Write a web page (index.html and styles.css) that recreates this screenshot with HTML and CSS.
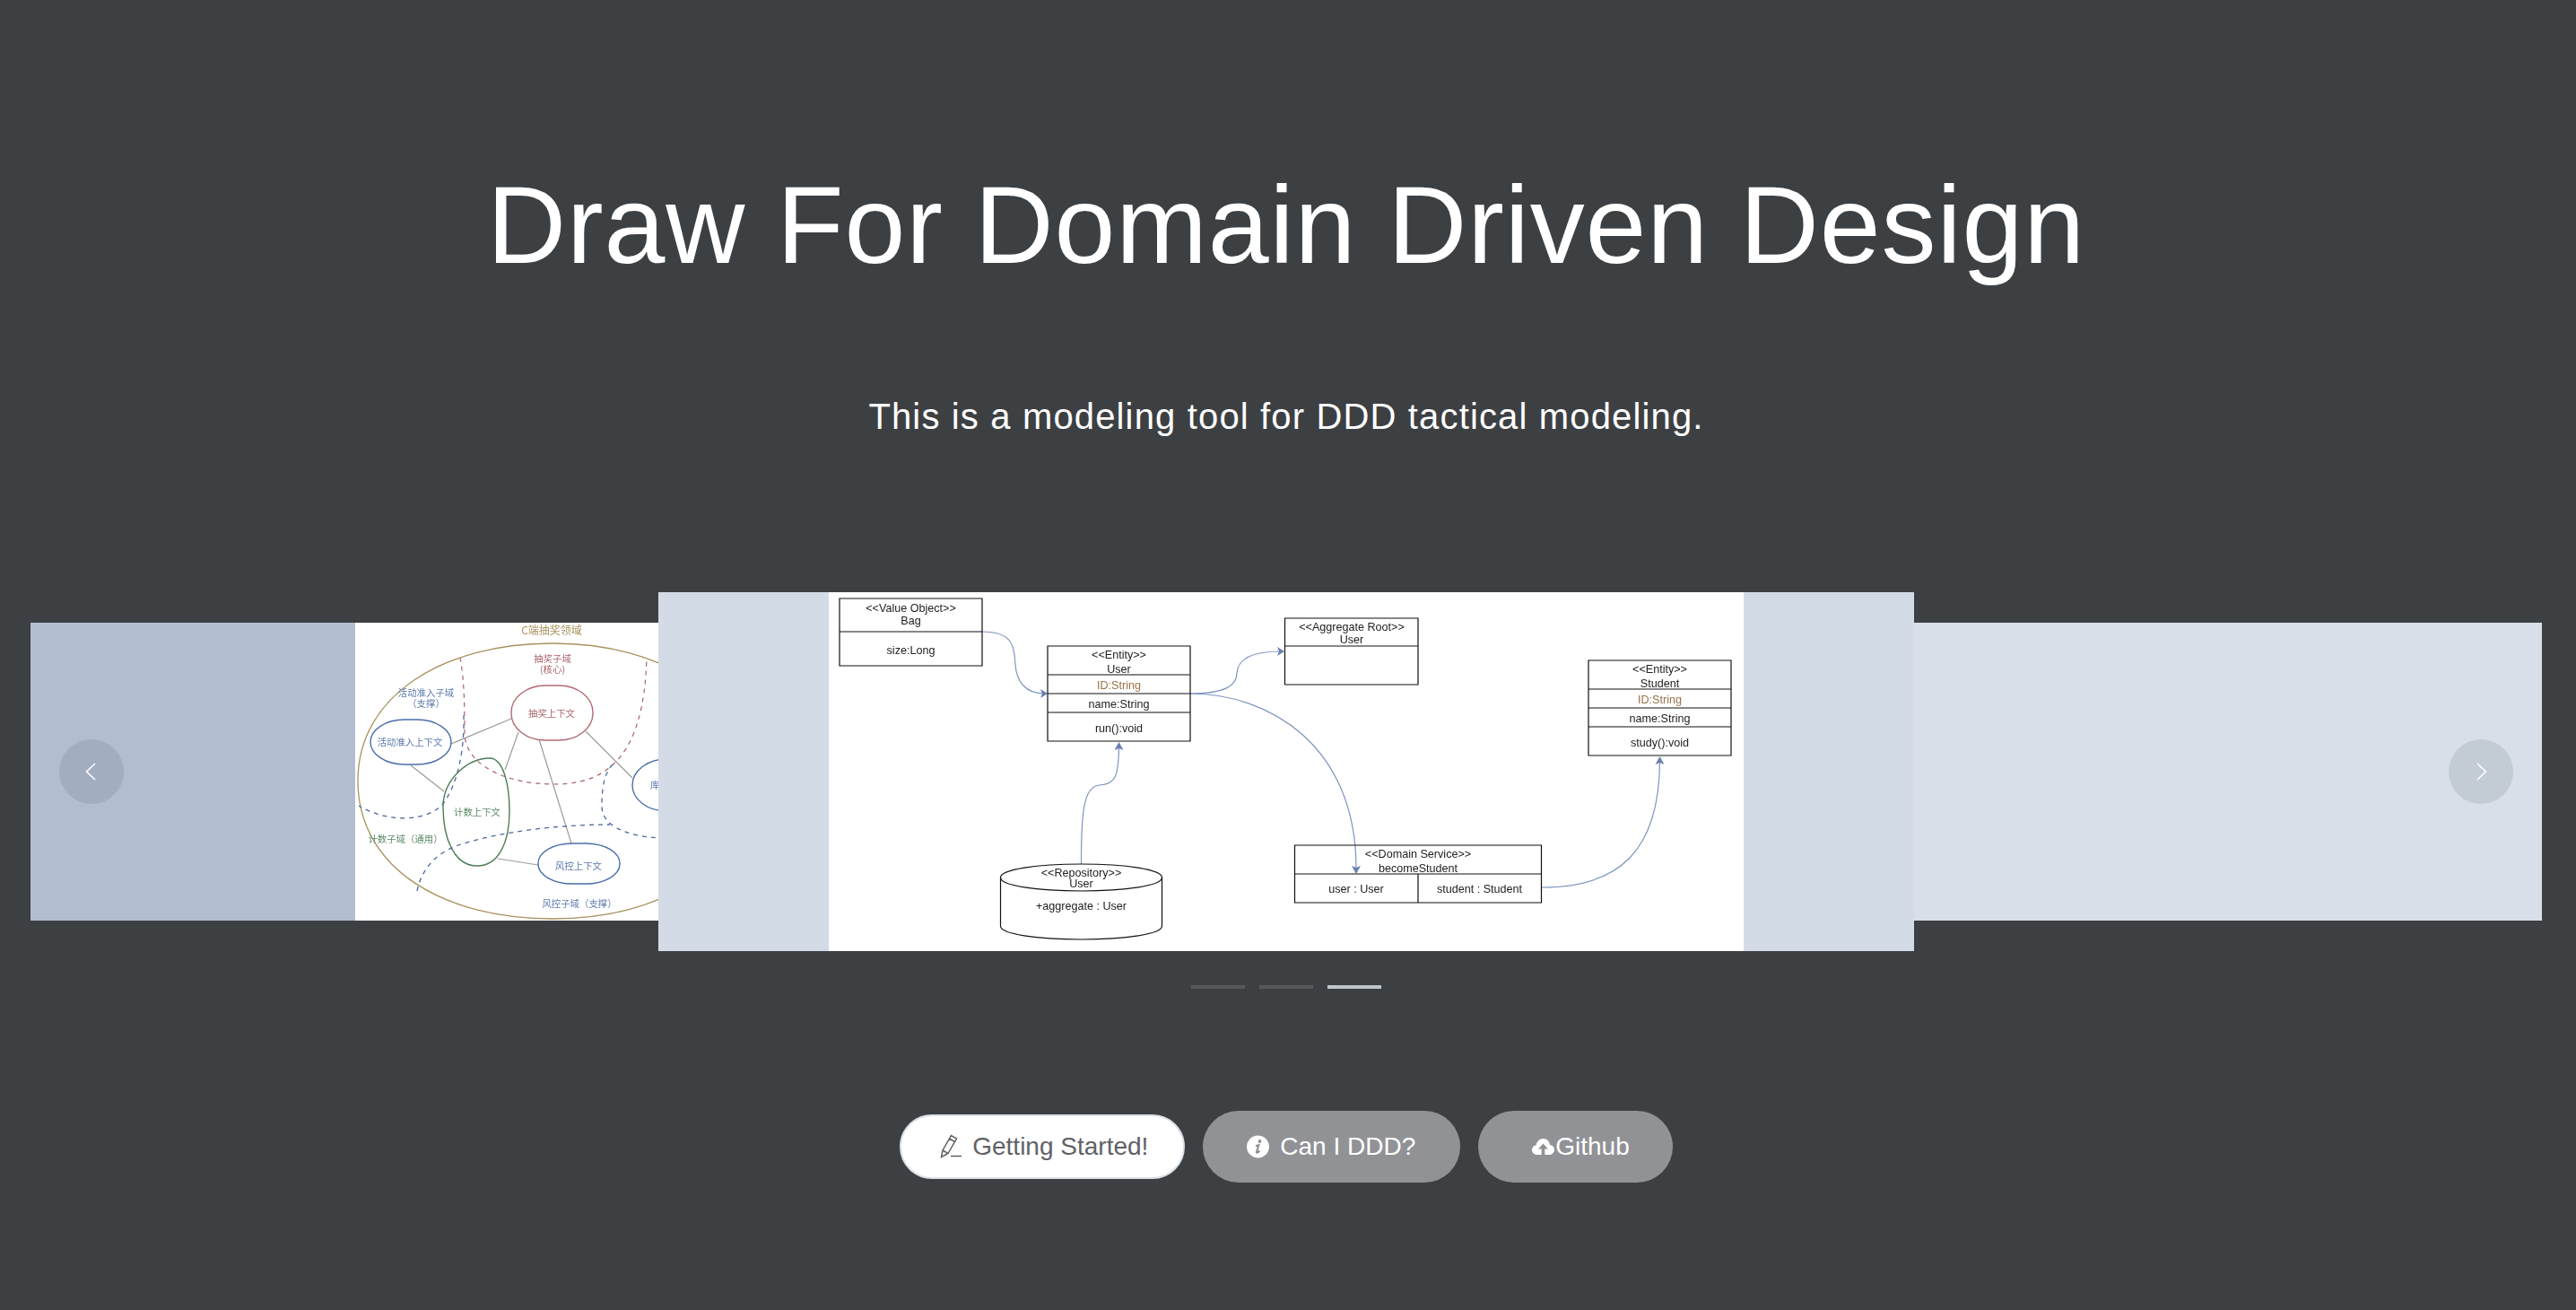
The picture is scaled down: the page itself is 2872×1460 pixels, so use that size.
FILE: index.html
```html
<!DOCTYPE html>
<html lang="en">
<head>
<meta charset="utf-8">
<title>Draw For Domain Driven Design</title>
<link rel="stylesheet" href="styles.css">
</head>
<body>
<main class="page">
  <h1 class="title">Draw For Domain Driven Design</h1>
  <p class="lead">This is a modeling tool for DDD tactical modeling.</p>

  <section class="carousel">
    <div class="card card-left">
      <svg class="shot" width="438" height="332" viewBox="0 0 438 332">
        <rect class="paper" width="438" height="332"/>
        <g class="ink">
        <path class="tan" d="M3 176C3 80 100 23 220 23C340 23 436 80 436 176C436 275 340 330 220 330C100 330 3 275 3 176Z"/>
        <path class="link" d="M107 135L174 107M62 159L99 188M182 122L167 164M205 130L241 246M257 121L309 173M159 263L204 270"/>
        <path class="dash-red" d="M117 39C122 65 122 100 122 125C124 160 170 180 222 180C280 180 322 150 325 39"/>
        <path class="dash-blue" d="M121 103C122 140 115 180 97 203C80 220 40 225 4 204"/>
        <path class="dash-blue" d="M69 299C75 270 95 255 115 248C170 230 240 225 284 225"/>
        <path class="dash-blue" d="M287 158C275 170 275 195 275 205C275 225 300 238 340 240"/>
        <rect class="ring-red" x="174" y="70" width="91" height="61" rx="38" ry="30"/>
        <rect class="ring-blue" x="17" y="108" width="90" height="50" rx="38" ry="25"/>
        <path class="ring-green" d="M150 151C165 151 172 180 172 210C172 245 160 271 136 271C110 271 98 240 98 205C98 175 125 151 150 151Z"/>
        <rect class="ring-blue" x="204" y="246" width="91" height="45" rx="38" ry="22"/>
        <rect class="ring-blue" x="309" y="152" width="91" height="58" rx="38" ry="29"/>
        <text class="cn t-tan t-title" x="219" y="13">C端抽奖领域</text>
        <text class="cn t-red" x="220" y="44">抽奖子域</text>
        <text class="cn t-red" x="220" y="56">(核心)</text>
        <text class="cn t-blue" x="79" y="82">活动准入子域</text>
        <text class="cn t-blue" x="79" y="94">（支撑）</text>
        <text class="cn t-red" x="219" y="105">抽奖上下文</text>
        <text class="cn t-blue" x="61" y="137">活动准入上下文</text>
        <text class="cn t-green" x="136" y="215">计数上下文</text>
        <text class="cn t-blue" x="249" y="275">风控上下文</text>
        <text class="cn t-blue t-start" x="329" y="185">库存上下文</text>
        <text class="cn t-green" x="56" y="245">计数子域（通用）</text>
        <text class="cn t-blue" x="250" y="317">风控子域（支撑）</text>
        </g>
      </svg>
      <button class="nav nav-left" type="button" aria-label="Previous">
        <svg class="chevron" width="24" height="24" viewBox="0 0 24 24"><path d="M16 3L6.500 12L16 21"/></svg>
      </button>
    </div>

    <div class="card card-center">
      <svg class="shot" width="1020" height="400" viewBox="0 0 1020 400">
        <rect class="paper" width="1020" height="400"/>
        <g class="ink">
        <path class="flow" d="M171 44C205 44 207 60 208 80C209 100 220 113 240 113"/>
        <path class="flow" d="M403 113C440 113 455 105 455 90C456 75 470 66 504 66"/>
        <path class="flow" d="M403 113C490 113 588 170 588 308"/>
        <path class="flow" d="M281.500 303C281.500 250 283 216 302 215C320 214 323 205 323.500 172"/>
        <path class="flow" d="M794.500 329C880 329 926 290 926.500 188"/>
        <path class="head" d="M244 113L236 108L238 113L236 118Z"/>
        <path class="head" d="M508 66L500 61L502 66L500 71Z"/>
        <path class="head" d="M588 314L583 305L588 307L593 305Z"/>
        <path class="head" d="M323.500 167L318.500 176L323.500 174L328.500 176Z"/>
        <path class="head" d="M926.500 183L921.500 192L926.500 190L931.500 192Z"/>

        <path class="box" d="M12 7H171V82H12ZM12 44H171"/>
        <text class="uml" x="91.500" y="21.500">&lt;&lt;Value Object&gt;&gt;</text>
        <text class="uml" x="91.500" y="35.500">Bag</text>
        <text class="uml" x="91.500" y="68.500">size:Long</text>

        <path class="box" d="M244 60H403V166H244ZM244 92H403M244 113H403M244 134H403"/>
        <text class="uml" x="323.500" y="74">&lt;&lt;Entity&gt;&gt;</text>
        <text class="uml" x="323.500" y="90">User</text>
        <text class="uml uml-id" x="323.500" y="107.500">ID:String</text>
        <text class="uml" x="323.500" y="128.500">name:String</text>
        <text class="uml" x="323.500" y="155.500">run():void</text>

        <path class="box" d="M508.500 29H657V103H508.500ZM508.500 60H657"/>
        <text class="uml" x="583" y="42.500">&lt;&lt;Aggregate Root&gt;&gt;</text>
        <text class="uml" x="583" y="56.500">User</text>

        <path class="box" d="M847 76H1006V182H847ZM847 108H1006M847 129H1006M847 150H1006"/>
        <text class="uml" x="926.500" y="90">&lt;&lt;Entity&gt;&gt;</text>
        <text class="uml" x="926.500" y="105.500">Student</text>
        <text class="uml uml-id" x="926.500" y="123.500">ID:String</text>
        <text class="uml" x="926.500" y="144.500">name:String</text>
        <text class="uml" x="926.500" y="171.500">study():void</text>

        <path class="box" d="M519.500 282H794.500V346H519.500ZM519.500 314H794.500M657 314V346"/>
        <text class="uml" x="657" y="295.500">&lt;&lt;Domain Service&gt;&gt;</text>
        <text class="uml" x="657" y="311.500">becomeStudent</text>
        <text class="uml" x="588" y="334.500">user : User</text>
        <text class="uml" x="725.500" y="334.500">student : Student</text>

        <path class="box" d="M191.500 318C191.500 309 232 303 281.500 303C331 303 371.500 309 371.500 318V372C371.500 381 331 387 281.500 387C232 387 191.500 381 191.500 372Z"/>
        <path class="box" d="M191.500 318C191.500 327 232 333 281.500 333C331 333 371.500 327 371.500 318"/>
        <text class="uml" x="281.500" y="316.500">&lt;&lt;Repository&gt;&gt;</text>
        <text class="uml" x="281.500" y="328.500">User</text>
        <text class="uml" x="281.500" y="353.500">+aggregate : User</text>
        </g>
      </svg>
    </div>

    <div class="card card-right">
      <button class="nav nav-right" type="button" aria-label="Next">
        <svg class="chevron" width="24" height="24" viewBox="0 0 24 24"><path d="M8 3L17.500 12L8 21"/></svg>
      </button>
    </div>
  </section>

  <div class="dots">
    <span class="dot"></span>
    <span class="dot"></span>
    <span class="dot dot-active"></span>
  </div>

  <div class="actions">
    <a class="btn btn-primary" href="#">
      <svg class="icon" width="28" height="28" viewBox="0 0 28 28">
        <path class="pencil" d="M3.500 25.500L5 18L14.500 1.500L20.500 5L11 21.500ZM5 18L11 21.500M12.500 5L18.500 8.500M14 24.500H26"/>
      </svg>
      <span>Getting Started!</span>
    </a>
    <a class="btn btn-info" href="#">
      <svg class="icon" width="28" height="28" viewBox="0 0 28 28">
        <circle class="icon-fill" cx="13.500" cy="14" r="12.500"/>
        <circle class="icon-cut" cx="15.500" cy="8" r="1.900"/>
        <path class="icon-cut-line" d="M11 13.200L14.300 12.300L12 20C11.800 21 12.600 21 15.500 18.700"/>
      </svg>
      <span>Can I DDD?</span>
    </a>
    <a class="btn btn-git" href="#">
      <svg class="icon" width="28" height="28" viewBox="0 0 28 28">
        <path class="icon-fill" d="M8 23C4.500 23 2 20.500 2 17.500C2 14.800 3.800 12.800 6.500 12.200C7.500 8.300 10.500 5 14.500 5C18.500 5 21.500 8 22 12C25 12.300 27 14.700 27 17.500C27 20.500 24.500 23 21.500 23Z"/>
        <path class="icon-cut" d="M14.500 10.500L20 16.500H16.300V23H12.700V16.500H9Z"/>
      </svg>
      <span>Github</span>
    </a>
  </div>
</main>
</body>
</html>
```
FILE: styles.css
```css
* {
  box-sizing: border-box;
}

html,
body {
  margin: 0;
  height: 100%;
}

body {
  background: #3d4043;
  font-family: "Liberation Sans", Arial, sans-serif;
  color: #fff;
}

.page {
  width: 2868px;
  height: 1460px;
  display: flex;
  flex-direction: column;
  align-items: center;
  overflow: hidden;
}

.title {
  margin: 182px 0 0;
  font-size: 122px;
  line-height: 138px;
  font-weight: 400;
  letter-spacing: 0.9px;
  white-space: nowrap;
}

.lead {
  margin: 121px 0 0;
  font-size: 40px;
  line-height: 46px;
  letter-spacing: 1.15px;
  white-space: nowrap;
}

.carousel {
  width: 2800px;
  height: 400px;
  margin-top: 173px;
  display: flex;
  align-items: center;
}

.card {
  position: relative;
  height: 332px;
  width: 1162px;
  flex: none;
  display: flex;
  justify-content: center;
  overflow: hidden;
}

.card-left {
  background: #b3bdd0;
}

.card-right {
  background: #d8dfe8;
  margin-left: -462px;
}

.card-center {
  z-index: 2;
  width: 1400px;
  height: 400px;
  margin-left: -462px;
  background: #d3dce6;
}

.shot {
  display: block;
  flex: none;
}

.ink {
  filter: blur(0.35px);
}

.paper {
  fill: #fff;
}

.nav {
  position: absolute;
  top: 130px;
  width: 72px;
  height: 72px;
  padding: 0;
  border: 0;
  border-radius: 50%;
  background: rgba(31, 45, 61, 0.11);
  display: flex;
  align-items: center;
  justify-content: center;
}

.nav-left {
  left: 32px;
}

.nav-right {
  right: 32px;
}

.chevron path {
  fill: none;
  stroke: #fff;
  stroke-width: 1.6;
}

/* context map */
.tan,
.link,
.dash-red,
.dash-blue,
.ring-red,
.ring-blue,
.ring-green {
  fill: none;
}

.tan {
  stroke: #a8935f;
  stroke-width: 1.3;
}

.link {
  stroke: #9c9c9c;
  stroke-width: 1.2;
}

.dash-red {
  stroke: #a9636b;
  stroke-width: 1.2;
  stroke-dasharray: 5 5;
}

.dash-blue {
  stroke: #4a689e;
  stroke-width: 1.3;
  stroke-dasharray: 5 5;
}

.ring-red {
  stroke: #b06a70;
  stroke-width: 1.4;
}

.ring-blue {
  stroke: #4a6fa8;
  stroke-width: 1.4;
}

.ring-green {
  stroke: #4b7d57;
  stroke-width: 1.4;
}

.cn {
  font-family: "Noto Sans CJK SC", "Liberation Sans", sans-serif;
  font-size: 10.4px;
  text-anchor: middle;
}

.t-title {
  font-size: 12px;
}

.t-start {
  text-anchor: start;
}

.t-tan {
  fill: #a8935f;
}

.t-red {
  fill: #a9636b;
}

.t-blue {
  fill: #5d7cad;
}

.t-green {
  fill: #5c8a68;
}

/* uml diagram */
.box {
  fill: none;
  stroke: #111;
  stroke-width: 1.2;
}

.flow {
  fill: none;
  stroke: #7f94bf;
  stroke-width: 1.2;
}

.head {
  fill: #6880b2;
}

.uml {
  font-family: "Liberation Sans", Arial, sans-serif;
  font-size: 12.600px;
  fill: #222;
  text-anchor: middle;
}

.uml-id {
  fill: #9a7348;
}

/* indicators */
.dots {
  margin-top: 38px;
  display: flex;
  gap: 16px;
}

.dot {
  width: 60px;
  height: 4px;
  background: rgba(255, 255, 255, 0.13);
}

.dot-active {
  background: #c0c4cc;
}

/* buttons */
.actions {
  margin-top: 136px;
  display: flex;
  align-items: center;
  gap: 20px;
}

.btn {
  display: flex;
  align-items: center;
  height: 80px;
  border-radius: 40px;
  font-size: 28px;
  text-decoration: none;
  color: #fff;
  background: #919296;
  white-space: nowrap;
}

.btn-primary {
  height: 72px;
  gap: 10px;
  padding: 0 39px 0 41px;
  background: #fff;
  border: 2px solid #dcdfe6;
  color: #606266;
}

.btn-info {
  gap: 10px;
  padding: 0 50px 0 48px;
}

.btn-git {
  padding: 0 48px 0 58px;
}

.icon {
  display: block;
  flex: none;
}

.pencil {
  fill: none;
  stroke: #606266;
  stroke-width: 1.5;
}

.icon-fill {
  fill: #fff;
}

.icon-cut {
  fill: #919296;
}

.icon-cut-line {
  fill: none;
  stroke: #919296;
  stroke-width: 2.2;
}
```
